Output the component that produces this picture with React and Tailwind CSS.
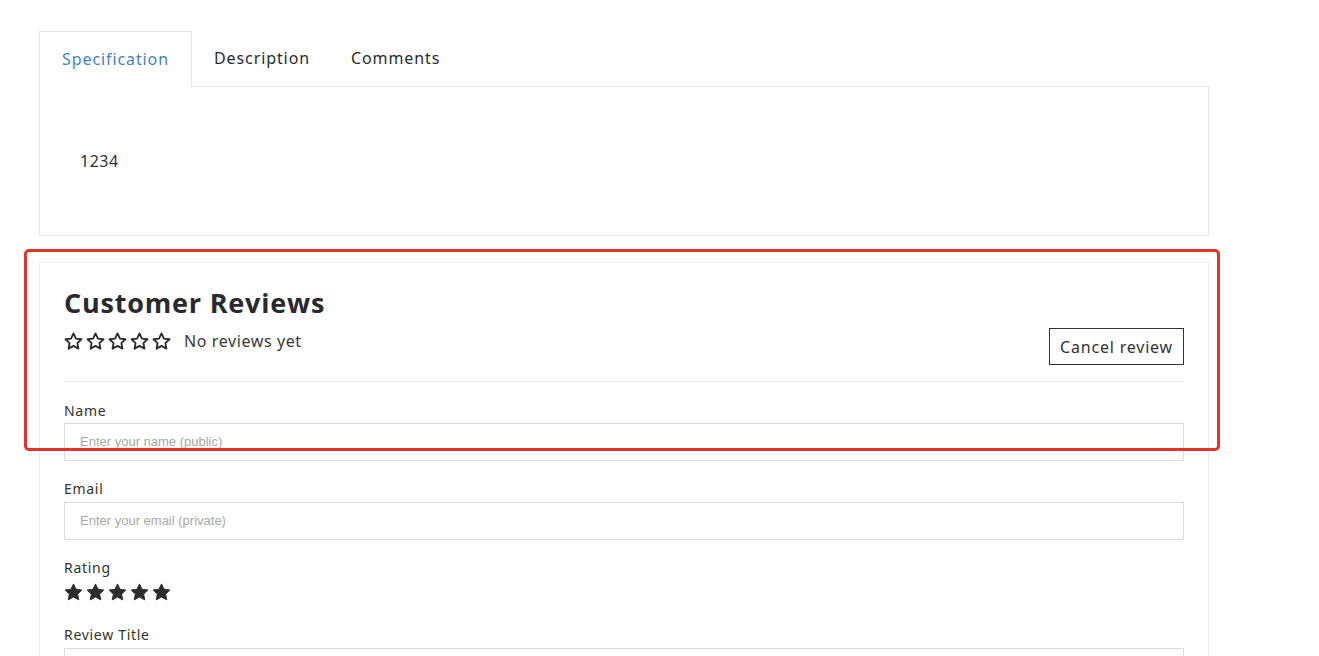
import React from "react";

const StarOutline = () => (
  <svg width="19" height="18" viewBox="0 0 24 23" fill="none" stroke="#2d2d2d" strokeWidth="2.4" strokeLinejoin="round">
    <path d="M12 1.8l3.1 6.6 7.1.9-5.2 4.9 1.3 7.1L12 17.8l-6.3 3.5 1.3-7.1-5.2-4.9 7.1-.9z" />
  </svg>
);

const StarFilled = () => (
  <svg width="19" height="18" viewBox="0 0 24 23" fill="#2d2d2d" stroke="#2d2d2d" strokeWidth="1.2" strokeLinejoin="round">
    <path d="M12 1.2l3.3 6.8 7.4 1-5.4 5.2 1.4 7.4L12 18l-6.7 3.6 1.4-7.4L1.3 9l7.4-1z" />
  </svg>
);

const body = { fontFamily: '"Noto Sans", "Open Sans", sans-serif' };
const ph = { fontFamily: '"Liberation Sans", Arial, sans-serif' };

export default function App() {
  return (
    <div className="relative min-h-[656px] w-[1319px] bg-white text-[#333]" style={body}>
      <div className="pl-[39px] pt-[31px] w-[1209px]">
        {/* Tabs */}
        <div className="flex h-[56px] text-[16px] tracking-[0.9px]">
          <div className="relative z-10 flex items-center justify-center w-[153px] pb-[2px] border border-b-0 border-[#e6e6e6] bg-white text-[#4a7fc3]">
            Specification
          </div>
          <div className="flex items-center pb-[2px] pl-[22px] pr-[41px] text-[#2b2b2b]">Description</div>
          <div className="flex items-center pb-[2px] text-[#2b2b2b]">Comments</div>
        </div>
        <div className="-mt-px h-[150px] border border-[#e6e6e6] pl-[40px] pt-[62px] text-[16px] tracking-[0.5px] text-[#333]">
          1234
        </div>

        {/* Reviews */}
        <div className="mt-[26px] border border-[#ececec] px-[24px] pt-[24px] pb-[40px]">
          <h2
            className="text-[27px] font-bold leading-[32px] tracking-[0.8px] text-[#2a2a2e]"
            style={{ fontFamily: '"Open Sans", "Noto Sans", sans-serif' }}
          >
            Customer Reviews
          </h2>
          <div className="flex items-start justify-between pb-[16px] border-b border-[#e8e8e8]">
            <div className="flex items-center gap-[13px] mt-[10px]">
              <div className="flex gap-[3px]">
                <StarOutline />
                <StarOutline />
                <StarOutline />
                <StarOutline />
                <StarOutline />
              </div>
              <span className="text-[16px] tracking-[0.6px] text-[#3a3a3a]">No reviews yet</span>
            </div>
            <button className="mt-[9px] h-[37px] border border-[#333] px-[10px] text-[16px] tracking-[0.8px] text-[#333]">
              Cancel review
            </button>
          </div>

          <label className="block mt-[19px] text-[14px] leading-[20px] tracking-[0.7px] text-[#333]">Name</label>
          <div className="mt-[2px] h-[38px] border border-[#dcdcdc] flex items-center px-[15px]">
            <span className="text-[13px] text-[#a9a9a9]" style={ph}>
              Enter your name (public)
            </span>
          </div>

          <label className="block mt-[18px] text-[14px] leading-[20px] tracking-[0.7px] text-[#333]">Email</label>
          <div className="mt-[3px] h-[38px] border border-[#dcdcdc] flex items-center px-[15px]">
            <span className="text-[13px] text-[#a9a9a9]" style={ph}>
              Enter your email (private)
            </span>
          </div>

          <label className="block mt-[18px] text-[14px] leading-[20px] tracking-[0.7px] text-[#333]">Rating</label>
          <div className="flex gap-[3px] mt-[5px]">
            <StarFilled />
            <StarFilled />
            <StarFilled />
            <StarFilled />
            <StarFilled />
          </div>

          <label className="block mt-[24px] text-[14px] leading-[20px] tracking-[0.7px] text-[#333]">Review Title</label>
          <div className="mt-[3px] h-[38px] border border-[#dcdcdc]" />
        </div>
      </div>

      {/* annotation overlay */}
      <div className="pointer-events-none absolute left-[24px] top-[249px] w-[1196px] h-[202px] rounded-[5px] border-[3px] border-[#e5332a]" />
    </div>
  );
}
